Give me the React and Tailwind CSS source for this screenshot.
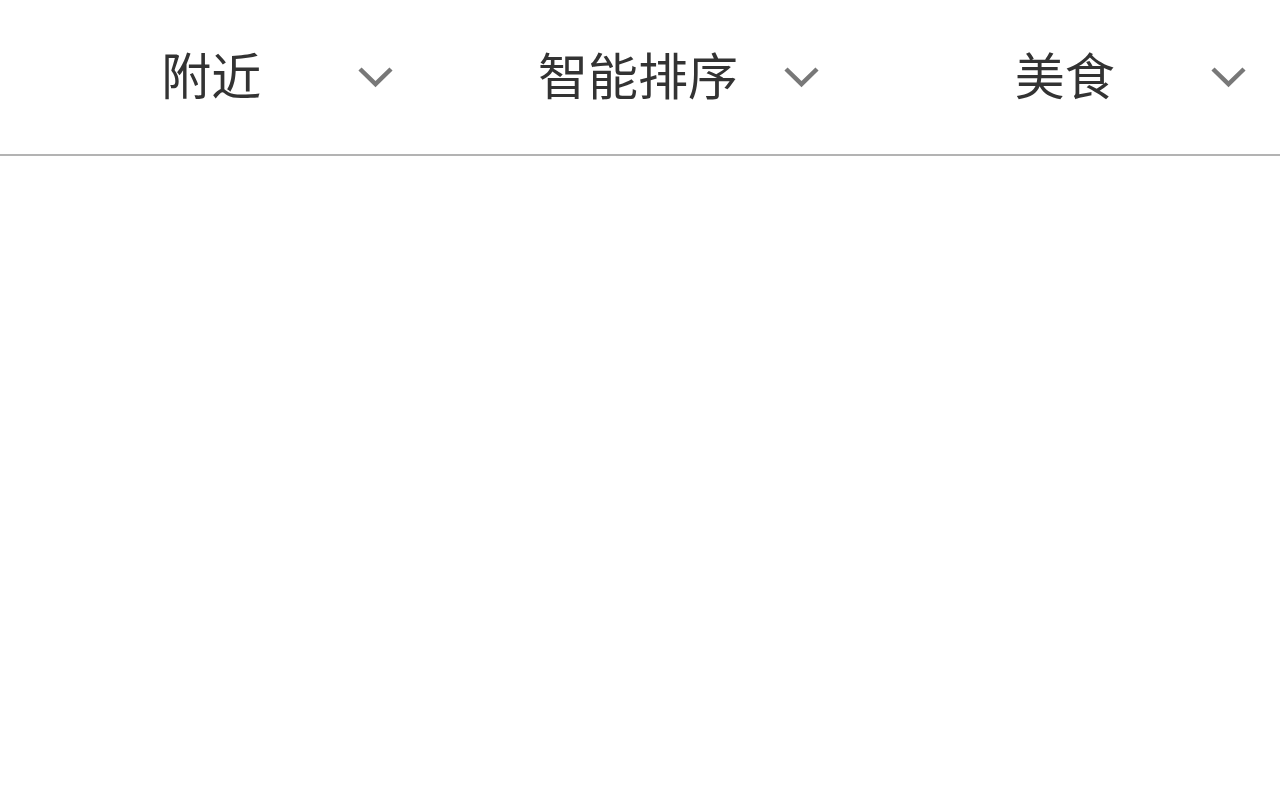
import React from 'react';

const tabs = ['附近', '智能排序', '美食'];

function Chevron() {
    return (
        <svg width="37" height="22" viewBox="0 0 37 22" fill="none" className="justify-self-end">
            <path d="M3 3 L18.5 18 L34 3" stroke="#787878" strokeWidth="4.5" />
        </svg>
    );
}

export default function App() {
    return (
        <div className="min-h-[800px] bg-white" style={{ fontFamily: '"Noto Sans CJK SC", "Noto Sans", sans-serif' }}>
            <div className="flex h-[156px] border-b-2 border-[#b3b3b3]">
                {tabs.map((tab) => (
                    <div key={tab} className="flex-1 grid grid-cols-[37px_1fr_37px] items-center px-[33px]">
                        <span />
                        <span className="text-center text-[50px] leading-none text-[#333333] pb-2 pr-1">{tab}</span>
                        <Chevron />
                    </div>
                ))}
            </div>
        </div>
    );
}
